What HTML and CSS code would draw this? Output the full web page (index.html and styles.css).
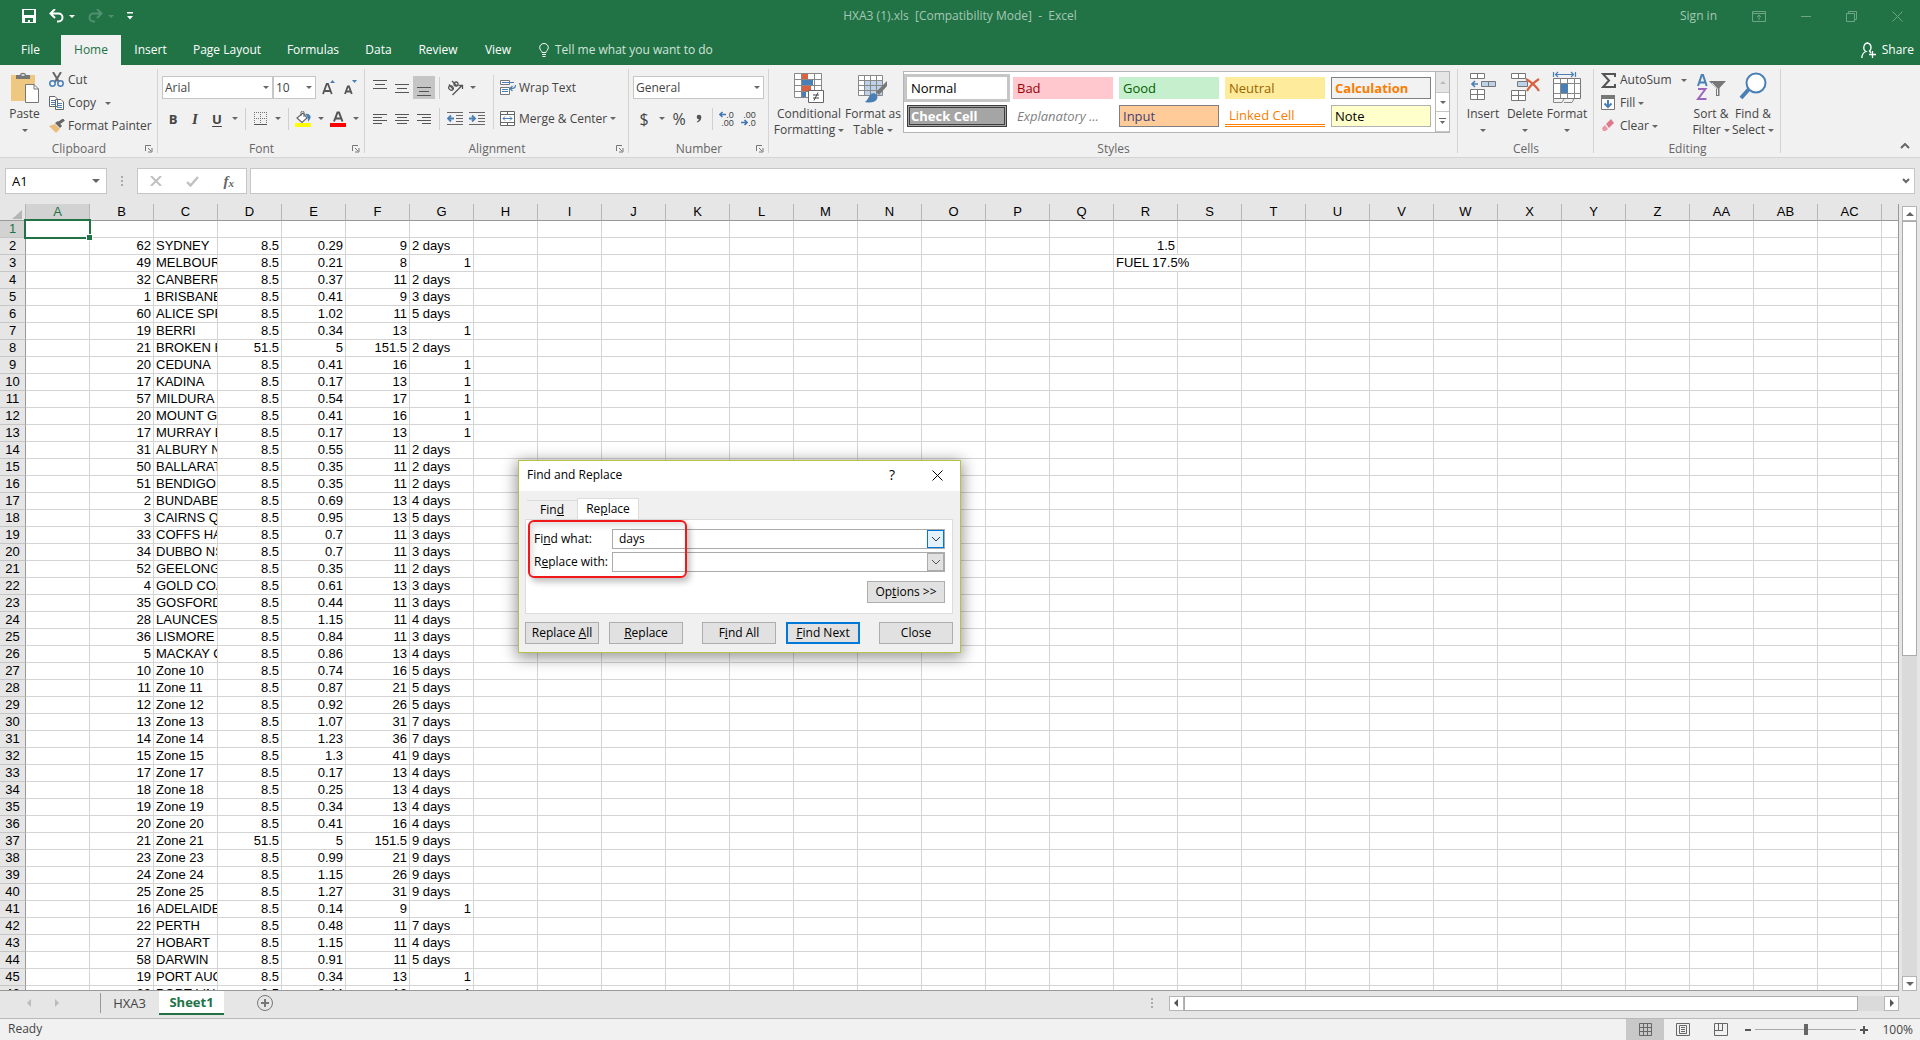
FILE: index.html
```html
<!DOCTYPE html>
<html lang="en">
<head>
<meta charset="utf-8">
<title>HXA3 (1).xls - Excel</title>
<link rel="stylesheet" href="styles.css">
</head>
<body>
<header class="titlebar">
  <div class="quick">
    <button class="plain" aria-label="Save"><svg width="14" height="14" viewBox="0 0 14 14"><path fill="#fff" fill-rule="evenodd" d="M0 0H14V14H0ZM2 1V6H12V1ZM3 9V13H6V11H8V13H11V9Z"/></svg></button>
    <button class="plain undo" aria-label="Undo"><svg width="15" height="14" viewBox="0 0 15 14"><path d="M6 0L1.500 4.500L6 9M2 4.500H9.500A4 4 0 0 1 9.500 12.500H8" fill="none" stroke="#fff" stroke-width="2"/></svg><i class="caret"></i></button>
    <button class="plain redo" aria-label="Redo"><svg width="15" height="14" viewBox="0 0 15 14"><path d="M9 0L13.500 4.500L9 9M13 4.500H5.500A4 4 0 0 0 5.500 12.500H7" fill="none" stroke="#4f9170" stroke-width="2"/></svg><i class="caret"></i></button>
    <button class="plain" aria-label="Customize toolbar"><svg width="6" height="8" viewBox="0 0 6 8"><path d="M0 0H6V1.500H0ZM0 4H6L3 7.500Z" fill="#fff"/></svg></button>
  </div>
  <div class="doc">HXA3 (1).xls&nbsp; [Compatibility Mode]&nbsp; -&nbsp; Excel</div>
  <div class="window">
    <a href="#">Sign in</a>
    <button class="plain" aria-label="Ribbon display"><svg width="14" height="11" viewBox="0 0 14 11"><path d="M.5.500H13.500V10.500H.5ZM.5 2.500H13.500M7 9V4M5 6L7 4L9 6" fill="none" stroke="#6fa587"/></svg></button>
    <button class="plain" aria-label="Minimize"><svg width="10" height="11"><path d="M0 5.500H10" stroke="#6fa587"/></svg></button>
    <button class="plain" aria-label="Restore"><svg width="11" height="11"><path d="M.5 2.500H8.500V10.500H.5ZM2.500 2.500V.5H10.500V8.500H8.500" fill="none" stroke="#6fa587"/></svg></button>
    <button class="plain" aria-label="Close"><svg width="11" height="11"><path d="M.5.500L10.500 10.500M10.500.5L.5 10.500" stroke="#6fa587"/></svg></button>
  </div>
</header>
<div class="tabbar">
  <nav class="tabs">
    <a href="#">File</a><a href="#" class="on">Home</a><a href="#">Insert</a><a href="#">Page Layout</a><a href="#">Formulas</a><a href="#">Data</a><a href="#">Review</a><a href="#">View</a>
  </nav>
  <button class="plain tell"><svg width="10" height="14" viewBox="0 0 10 14"><path d="M3 9.500C3 8 .7 7 .7 4.500A4.300 4 0 0 1 9.300 4.500C9.300 7 7 8 7 9.500ZM3 11.500H7M3.500 13.500H6.500" fill="none" stroke="#fff"/></svg>Tell me what you want to do</button>
  <button class="plain share"><svg width="16" height="17" viewBox="0 0 16 17"><path d="M6.500 1A4 4.500 0 0 1 8.500 9L10 11M7 1A4 4.500 0 0 0 5 9.500C2 10.500 1 13 .8 16M11.500 9V16M8 12.500H15" fill="none" stroke="#fff" stroke-width="1.300"/></svg>Share</button>
</div>

<div class="ribbon">
  <section class="group clipboard">
    <div class="body">
      <button class="tall"><svg width="30" height="32" viewBox="0 0 30 32"><path d="M1 4H25V30H1Z" fill="#eec880"/><path d="M6 8V4H10C10 1 16 1 16 4H20V8Z" fill="#777"/><path d="M11.500 4H14.500" stroke="#f0f0f0" stroke-width="1.500"/><path d="M15.500 13.500H24L28.500 18V31.500H15.500Z" fill="#fff" stroke="#777"/><path d="M24 13.500V18H28.500" fill="none" stroke="#777"/></svg><span>Paste</span><span><i class="caret"></i></span></button>
      <div class="stack">
        <button class="row"><svg width="16" height="16" viewBox="0 0 16 16"><path d="M4 0L10 10M12 0L6 10" stroke="#666" stroke-width="2"/><g fill="none" stroke="#4a7fb5" stroke-width="1.500"><circle cx="3.500" cy="11.500" r="2.700"/><circle cx="11.500" cy="11.500" r="2.700"/></g></svg>Cut</button>
        <button class="row"><svg width="16" height="14" viewBox="0 0 16 14"><path d="M.5.500H6L8.500 3V10.500H.5ZM6.500 3.500H12L14.500 6V13.500H6.500Z" fill="#fff" stroke="#666"/><path d="M2 4.500H6M2 6.500H6M2 8.500H6M8 7.500H13M8 9.500H13M8 11.500H13" stroke="#4a7fb5"/></svg>Copy<i class="caret wide"></i></button>
        <button class="row"><svg width="16" height="14" viewBox="0 0 16 14"><path d="M0 7L6 5L11 10L7 14Z" fill="#e9be7c"/><path d="M6 4L9 2L13 7L11 9Z" fill="#666"/><path d="M10 4L15 .5" stroke="#666" stroke-width="3"/></svg>Format Painter</button>
      </div>
    </div>
    <footer>Clipboard<svg class="launch" viewBox="0 0 8 8"><path d="M.5 6V.5H6M3 3L6 6M7 3V7H3" fill="none" stroke="#777"/></svg></footer>
  </section>

  <section class="group font">
    <div class="body lines">
      <div class="line">
        <label class="combo name"><select aria-label="Font"><option>Arial</option></select><i class="caret"></i></label><label class="combo size"><select aria-label="Font size"><option>10</option></select><i class="caret"></i></label>
        <button class="icon grow" aria-label="Grow font"><svg width="14" height="16" viewBox="0 0 14 16"><path d="M1 14L4.700 4H6L9.700 14M2.500 11H8" fill="none" stroke="#555" stroke-width="1.800"/><path d="M8 3H13L10.500 0Z" fill="#4a7fb5"/></svg></button>
        <button class="icon" aria-label="Shrink font"><svg width="14" height="16" viewBox="0 0 14 16"><path d="M1 14L3.800 6.500H5L7.800 14M2.500 11.500H7" fill="none" stroke="#555" stroke-width="1.800"/><path d="M8 0H13L10.500 3Z" fill="#4a7fb5"/></svg></button>
      </div>
      <div class="line">
        <button class="icon b">B</button><button class="icon i">I</button><button class="icon u">U</button><button class="drop" aria-label="Underline style"><i class="caret"></i></button>
        <i class="rule"></i>
        <button class="icon" aria-label="Borders"><svg width="13" height="13" viewBox="0 0 13 13"><path d="M.5 0V12M6.500 0V12M12.500 0V12M0 .5H13M0 6.500H13" stroke="#777" stroke-dasharray="1 1"/><path d="M0 12.500H13" stroke="#555"/></svg></button><button class="drop" aria-label="Border style"><i class="caret"></i></button>
        <i class="rule"></i>
        <button class="icon" aria-label="Fill colour"><svg width="16" height="16" viewBox="0 0 16 16"><path d="M2 7L8 2L12 7L7 11.500Z" fill="#fff" stroke="#666" stroke-width="1.200"/><path d="M6 5V1.500A1.500 1.500 0 0 1 9 1.500V6" fill="none" stroke="#666"/><path d="M10 3C14 2 17 5 15 8L13 11C13 8 13 6 10 3Z" fill="#4a7fb5"/><path d="M0 12H16V16H0Z" fill="#ff0"/></svg></button><button class="drop" aria-label="Fill colours"><i class="caret"></i></button>
        <button class="icon" aria-label="Font colour"><svg width="16" height="16" viewBox="0 0 16 16"><path d="M4 10.500L7.500 1.500H9L12.500 10.500M5.500 7.500H11" fill="none" stroke="#555" stroke-width="2"/><path d="M0 12H16V16H0Z" fill="#f00"/></svg></button><button class="drop" aria-label="Font colours"><i class="caret"></i></button>
      </div>
    </div>
    <footer>Font<svg class="launch" viewBox="0 0 8 8"><path d="M.5 6V.5H6M3 3L6 6M7 3V7H3" fill="none" stroke="#777"/></svg></footer>
  </section>

  <section class="group align">
    <div class="body">
      <div class="lines">
        <div class="line">
          <button class="icon" aria-label="Top align"><svg width="14" height="16"><path d="M0 .5H14M2 4.500H12M0 8.500H14" stroke="#555"/></svg></button>
          <button class="icon" aria-label="Middle align"><svg width="14" height="16"><path d="M0 4.500H14M2 8.500H12M0 12.500H14" stroke="#555"/></svg></button>
          <button class="icon pressed" aria-label="Bottom align"><svg width="14" height="16"><path d="M0 7.500H14M2 11.500H12M0 15.500H14" stroke="#555"/></svg></button>
          <i class="rule"></i>
          <button class="icon" aria-label="Orientation"><svg width="17" height="16" viewBox="0 0 17 16"><g fill="none" stroke="#555" stroke-width="1.300"><ellipse cx="4" cy="8" rx="2" ry="2.500" transform="rotate(-45 4 8)"/><path d="M2 4.500L6 9M5 1L10 6M5.500 15L15 5.500M11.500 5.500H15.500V9"/><circle cx="9" cy="4" r="2"/></g></svg></button><button class="drop" aria-label="Orientation menu"><i class="caret"></i></button>
        </div>
        <div class="line">
          <button class="icon" aria-label="Align left"><svg width="14" height="12"><path d="M0 1.500H14M0 4.500H9M0 7.500H14M0 10.500H9" stroke="#555"/></svg></button>
          <button class="icon" aria-label="Center"><svg width="14" height="12"><path d="M0 1.500H14M2 4.500H12M0 7.500H14M2 10.500H12" stroke="#555"/></svg></button>
          <button class="icon" aria-label="Align right"><svg width="14" height="12"><path d="M0 1.500H14M5 4.500H14M0 7.500H14M5 10.500H14" stroke="#555"/></svg></button>
          <i class="rule"></i>
          <button class="icon" aria-label="Decrease indent"><svg width="16" height="13"><path d="M0 .5H16M9 3.500H16M9 6.500H16M9 9.500H16M0 12.500H16" stroke="#666"/><path d="M7 6.500H1M4 3.500L1 6.500L4 9.500" fill="none" stroke="#4a7fb5" stroke-width="1.800"/></svg></button>
          <button class="icon" aria-label="Increase indent"><svg width="16" height="13"><path d="M0 .5H16M9 3.500H16M9 6.500H16M9 9.500H16M0 12.500H16" stroke="#666"/><path d="M0 6.500H6M3 3.500L6 6.500L3 9.500" fill="none" stroke="#4a7fb5" stroke-width="1.800"/></svg></button>
        </div>
      </div>
      <div class="lines wraps">
        <button class="row line"><svg width="16" height="16" viewBox="0 0 16 16"><path d="M.5.500H9.500V4.500H.5ZM.5 7.500H9.500V14.500H.5Z" fill="#fff" stroke="#777"/><path d="M2 2.500H14M2 9.500H8M2 11.500H8M15.500 5C15.500 8 14 8.500 10 8.500M12.500 6L10 8.500L12.500 11" fill="none" stroke="#4a7fb5" stroke-width="1.200"/></svg>Wrap Text</button>
        <button class="row line"><svg width="16" height="15" viewBox="0 0 16 15"><path d="M.5.500H14.500V14.500H.5ZM.5 3.500H14.500M.5 11.500H14.500M7.500.5V3.500M7.500 11.500V14.500" fill="#fff" stroke="#666"/><path d="M3 7.500H12M5 5.500L3 7.500L5 9.500M10 5.500L12 7.500L10 9.500" fill="none" stroke="#4a7fb5"/></svg>Merge &amp; Center<i class="caret"></i></button>
      </div>
    </div>
    <footer>Alignment<svg class="launch" viewBox="0 0 8 8"><path d="M.5 6V.5H6M3 3L6 6M7 3V7H3" fill="none" stroke="#777"/></svg></footer>
  </section>

  <section class="group number">
    <div class="body lines">
      <div class="line"><label class="combo format"><select aria-label="Number format"><option>General</option></select><i class="caret"></i></label></div>
      <div class="line">
        <button class="icon sym">$</button><button class="drop" aria-label="Currency"><i class="caret"></i></button><button class="icon sym">%</button><button class="icon sym comma" aria-label="Comma style"><svg width="6" height="9" viewBox="0 0 6 9"><circle cx="3" cy="3" r="2.300" fill="#555"/><path d="M5.300 3C5.300 6 4 7.800 1 8.500L.8 7.700C2.500 7 3 6 3 4Z" fill="#555"/></svg></button>
        <i class="rule"></i>
        <button class="icon dec" aria-label="Increase decimal"><span><svg width="7" height="7"><path d="M7 3.500H1M3.500 1L1 3.500L3.500 6" fill="none" stroke="#3f77b3" stroke-width="1.600"/></svg>.0</span><span>.00</span></button>
        <button class="icon dec" aria-label="Decrease decimal"><span>.00</span><span><svg width="7" height="7"><path d="M0 3.500H6M3.500 1L6 3.500L3.500 6" fill="none" stroke="#3f77b3" stroke-width="1.600"/></svg>.0</span></button>
      </div>
    </div>
    <footer>Number<svg class="launch" viewBox="0 0 8 8"><path d="M.5 6V.5H6M3 3L6 6M7 3V7H3" fill="none" stroke="#777"/></svg></footer>
  </section>

  <section class="group styles">
    <div class="body">
      <button class="tall cond"><svg width="30" height="32" viewBox="0 0 30 32"><path d="M.5 2.500H27.500V26.500H.5Z" fill="#fff"/><path d="M8 3H14V8H8ZM8 15H17V20H8Z" fill="#d9613f"/><path d="M8 9H19V14H8ZM8 21H12V26H8Z" fill="#4a7fb5"/><path d="M.5 2.500H27.500V26.500H.5ZM7.500 2.500V26.500M20.500 2.500V26.500M.5 8.500H27.500M.5 14.500H27.500M.5 20.500H27.500" fill="none" stroke="#888"/><path d="M14.500 19.500H29.500V31.500H14.500Z" fill="#fff" stroke="#666"/><path d="M19 24H25M19 27H25M24 21.500L20 29.500" stroke="#444"/></svg><span>Conditional</span><span>Formatting<i class="caret"></i></span></button>
      <button class="tall"><svg width="30" height="32" viewBox="0 0 30 32"><path d="M.5 4.500H24.500V24.500H.5Z" fill="#fff"/><path d="M7 10H24V24H7Z" fill="#bdd2e8"/><path d="M.5 4.500H24.500V24.500H.5ZM6.500 4.500V24.500M12.500 4.500V24.500M18.500 4.500V24.500M.5 9.500H24.500M.5 14.500H24.500M.5 19.500H24.500" fill="none" stroke="#888"/><path d="M29 10V15L21 24L18 21Z" fill="#777"/><path d="M7 31C10 29 10 26 13 23C16 21 21 24 19 28C17 32 11 32 7 31Z" fill="#4a7fb5"/></svg><span>Format as</span><span>Table<i class="caret"></i></span></button>
      <div class="gallery">
        <div class="swatches">
          <button class="s normal">Normal</button><button class="s bad">Bad</button><button class="s good">Good</button><button class="s neutral">Neutral</button><button class="s calc">Calculation</button>
          <button class="s check">Check Cell</button><button class="s expl">Explanatory ...</button><button class="s inp">Input</button><button class="s link">Linked Cell</button><button class="s note">Note</button>
        </div>
        <div class="scroller"><button class="off" aria-label="Previous styles"><i class="caret up"></i></button><button aria-label="Next styles"><i class="caret"></i></button><button aria-label="More styles"><svg width="7" height="7"><path d="M0 .5H7" stroke="#666"/><path d="M1 3H6L3.500 6Z" fill="#666"/></svg></button></div>
      </div>
    </div>
    <footer>Styles</footer>
  </section>

  <section class="group cells">
    <div class="body">
      <button class="tall"><svg width="28" height="32" viewBox="0 0 28 32"><path d="M1.500 2.500H15.500V7.500H1.500ZM8.500 2.500V7.500M1.500 18.500H15.500V28.500H1.500ZM8.500 18.500V28.500M1.500 23.500H15.500" fill="#fff" stroke="#777"/><path d="M12.500 10.500H26.500V15.500H12.500ZM19.500 10.500V15.500" fill="#bdd2e8" stroke="#777"/><path d="M9 13H3M6 10L3 13L6 16" fill="none" stroke="#4a7fb5" stroke-width="1.600"/></svg><span>Insert</span><span><i class="caret"></i></span></button>
      <button class="tall"><svg width="30" height="32" viewBox="0 0 30 32"><path d="M1.500 2.500H15.500V7.500H1.500ZM8.500 2.500V7.500M1.500 19.500H15.500V29.500H1.500ZM8.500 19.500V29.500M1.500 24.500H15.500" fill="#fff" stroke="#777"/><path d="M7.500 10.500H17.500V15.500H7.500Z" fill="#bdd2e8" stroke="#777"/><path d="M16 8C21 11 26 15 29 20M29 8C23 12 19 16 17 20" fill="none" stroke="#d9613f" stroke-width="2.200"/></svg><span>Delete</span><span><i class="caret"></i></span></button>
      <button class="tall"><svg width="30" height="32" viewBox="0 0 30 32"><path d="M1.500 7.500H28.500V27.500H1.500Z" fill="#fff" stroke="#777"/><path d="M8.500 7.500V27.500M15.500 7.500V27.500M22.500 7.500V27.500M1.500 12.500H28.500M1.500 22.500H28.500M1.500 28V31.500H10L12 28M12 31.500H20L22 28" fill="none" stroke="#888"/><path d="M9 13H16V22H9Z" fill="#4a7fb5"/><path d="M1.500 1V6M23.500 1V6M3 3.500H22M6 1L3.500 3.500L6 6M19 1L21.500 3.500L19 6" fill="none" stroke="#4a7fb5" stroke-width="1.200"/></svg><span>Format</span><span><i class="caret"></i></span></button>
    </div>
    <footer>Cells</footer>
  </section>

  <section class="group editing">
    <div class="body">
      <div class="stack">
        <button class="row"><svg width="16" height="15" viewBox="0 0 16 15"><path d="M14 4V1H2L8 7.500L2 14H14V11" fill="none" stroke="#555" stroke-width="2"/></svg>AutoSum<i class="caret wide"></i></button>
        <button class="row"><svg width="16" height="16" viewBox="0 0 16 16"><path d="M.5.500H13.500V14.500H.5Z" fill="#fff" stroke="#777"/><path d="M0 0H14V4H0Z" fill="#777"/><path d="M7 5V12M3.500 8.500L7 12L10.500 8.500" fill="none" stroke="#4a7fb5" stroke-width="2"/></svg>Fill<i class="caret"></i></button>
        <button class="row"><svg width="16" height="14" viewBox="0 0 16 14"><path d="M5 5L10 0L13 4L8 9Z" fill="#e0788b"/><path d="M4 6L7 10L4.500 12H2L1 9Z" fill="#e996a5"/></svg>Clear<i class="caret"></i></button>
      </div>
      <button class="tall"><svg width="30" height="32" viewBox="0 0 30 32"><path d="M2 15L5.700 4H7L10.700 15M3.500 11.500H9" fill="none" stroke="#4a7fb5" stroke-width="2"/><path d="M2 18H9.500L2 28H10.500" fill="none" stroke="#9b66bb" stroke-width="2"/><path d="M13 10H30L23.500 17V25H20V17Z" fill="#777"/><path d="M16 12L21.500 18V24" fill="none" stroke="#f0f0f0"/></svg><span>Sort &amp;</span><span>Filter<i class="caret"></i></span></button>
      <button class="tall"><svg width="28" height="32" viewBox="0 0 28 32"><path d="M10 18L2 27" stroke="#4a7fb5" stroke-width="4"/><circle cx="17" cy="12" r="9.500" fill="#fff" stroke="#4a7fb5" stroke-width="2"/></svg><span>Find &amp;</span><span>Select<i class="caret"></i></span></button>
    </div>
    <footer>Editing</footer>
  </section>
  <button class="plain collapse" aria-label="Collapse ribbon"><svg width="10" height="6"><path d="M1 5L5 1L9 5" fill="none" stroke="#666" stroke-width="2"/></svg></button>
</div>

<div class="formula">
  <label class="namebox"><input aria-label="Name box" value="A1"><i class="caret big"></i></label>
  <i class="dots"></i>
  <div class="fx">
    <button class="plain" aria-label="Cancel"><svg width="12" height="10"><path d="M1 0L11 10M11 0L1 10" stroke="#c0c0c0" stroke-width="2"/></svg></button>
    <button class="plain" aria-label="Enter"><svg width="13" height="11"><path d="M1 6L4.500 9.500L12 1" fill="none" stroke="#c0c0c0" stroke-width="2.400"/></svg></button>
    <button class="plain fn">f<small>x</small></button>
  </div>
  <label class="entry"><input aria-label="Formula"><svg width="8" height="6"><path d="M1 1L4 4L7 1" fill="none" stroke="#666" stroke-width="2"/></svg></label>
</div>

<main class="sheet">
<div class="grid">
<table>
<colgroup><col class="rowhead"><col span="30"></colgroup>
<thead><tr><th class="corner"><svg width="10" height="9"><path d="M10 0V9H0Z" fill="#b5b5b5"/></svg><th class="sel">A<th>B<th>C<th>D<th>E<th>F<th>G<th>H<th>I<th>J<th>K<th>L<th>M<th>N<th>O<th>P<th>Q<th>R<th>S<th>T<th>U<th>V<th>W<th>X<th>Y<th>Z<th>AA<th>AB<th>AC<th></tr></thead>
<tbody>
<tr><th class="sel">1<td class="active"><i class="cursor"></i>
<tr><th>2<td><td>62<td>SYDNEY<td>8.5<td>0.29<td>9<td class="t">2 days<td colspan="10"><td class="n">1.5
<tr><th>3<td><td>49<td>MELBOURNE<td>8.5<td>0.21<td>8<td>1<td colspan="10"><td class="spill" colspan="2"><span>FUEL 17.5%</span>
<tr><th>4<td><td>32<td>CANBERRA<td>8.5<td>0.37<td>11<td class="t">2 days
<tr><th>5<td><td>1<td>BRISBANE<td>8.5<td>0.41<td>9<td class="t">3 days
<tr><th>6<td><td>60<td>ALICE SPRINGS<td>8.5<td>1.02<td>11<td class="t">5 days
<tr><th>7<td><td>19<td>BERRI<td>8.5<td>0.34<td>13<td>1
<tr><th>8<td><td>21<td>BROKEN HILL<td>51.5<td>5<td>151.5<td class="t">2 days
<tr><th>9<td><td>20<td>CEDUNA<td>8.5<td>0.41<td>16<td>1
<tr><th>10<td><td>17<td>KADINA<td>8.5<td>0.17<td>13<td>1
<tr><th>11<td><td>57<td>MILDURA<td>8.5<td>0.54<td>17<td>1
<tr><th>12<td><td>20<td>MOUNT GAMBIER<td>8.5<td>0.41<td>16<td>1
<tr><th>13<td><td>17<td>MURRAY BRIDGE<td>8.5<td>0.17<td>13<td>1
<tr><th>14<td><td>31<td>ALBURY NSW<td>8.5<td>0.55<td>11<td class="t">2 days
<tr><th>15<td><td>50<td>BALLARAT<td>8.5<td>0.35<td>11<td class="t">2 days
<tr><th>16<td><td>51<td>BENDIGO<td>8.5<td>0.35<td>11<td class="t">2 days
<tr><th>17<td><td>2<td>BUNDABERG<td>8.5<td>0.69<td>13<td class="t">4 days
<tr><th>18<td><td>3<td>CAIRNS QLD<td>8.5<td>0.95<td>13<td class="t">5 days
<tr><th>19<td><td>33<td>COFFS HARBOUR<td>8.5<td>0.7<td>11<td class="t">3 days
<tr><th>20<td><td>34<td>DUBBO NSW<td>8.5<td>0.7<td>11<td class="t">3 days
<tr><th>21<td><td>52<td>GEELONG<td>8.5<td>0.35<td>11<td class="t">2 days
<tr><th>22<td><td>4<td>GOLD COAST<td>8.5<td>0.61<td>13<td class="t">3 days
<tr><th>23<td><td>35<td>GOSFORD<td>8.5<td>0.44<td>11<td class="t">3 days
<tr><th>24<td><td>28<td>LAUNCESTON<td>8.5<td>1.15<td>11<td class="t">4 days
<tr><th>25<td><td>36<td>LISMORE<td>8.5<td>0.84<td>11<td class="t">3 days
<tr><th>26<td><td>5<td>MACKAY QLD<td>8.5<td>0.86<td>13<td class="t">4 days
<tr><th>27<td><td>10<td>Zone 10<td>8.5<td>0.74<td>16<td class="t">5 days
<tr><th>28<td><td>11<td>Zone 11<td>8.5<td>0.87<td>21<td class="t">5 days
<tr><th>29<td><td>12<td>Zone 12<td>8.5<td>0.92<td>26<td class="t">5 days
<tr><th>30<td><td>13<td>Zone 13<td>8.5<td>1.07<td>31<td class="t">7 days
<tr><th>31<td><td>14<td>Zone 14<td>8.5<td>1.23<td>36<td class="t">7 days
<tr><th>32<td><td>15<td>Zone 15<td>8.5<td>1.3<td>41<td class="t">9 days
<tr><th>33<td><td>17<td>Zone 17<td>8.5<td>0.17<td>13<td class="t">4 days
<tr><th>34<td><td>18<td>Zone 18<td>8.5<td>0.25<td>13<td class="t">4 days
<tr><th>35<td><td>19<td>Zone 19<td>8.5<td>0.34<td>13<td class="t">4 days
<tr><th>36<td><td>20<td>Zone 20<td>8.5<td>0.41<td>16<td class="t">4 days
<tr><th>37<td><td>21<td>Zone 21<td>51.5<td>5<td>151.5<td class="t">9 days
<tr><th>38<td><td>23<td>Zone 23<td>8.5<td>0.99<td>21<td class="t">9 days
<tr><th>39<td><td>24<td>Zone 24<td>8.5<td>1.15<td>26<td class="t">9 days
<tr><th>40<td><td>25<td>Zone 25<td>8.5<td>1.27<td>31<td class="t">9 days
<tr><th>41<td><td>16<td>ADELAIDE<td>8.5<td>0.14<td>9<td>1
<tr><th>42<td><td>22<td>PERTH<td>8.5<td>0.48<td>11<td class="t">7 days
<tr><th>43<td><td>27<td>HOBART<td>8.5<td>1.15<td>11<td class="t">4 days
<tr><th>44<td><td>58<td>DARWIN<td>8.5<td>0.91<td>11<td class="t">5 days
<tr><th>45<td><td>19<td>PORT AUGUSTA<td>8.5<td>0.34<td>13<td>1
<tr><th>46<td><td>20<td>PORT LINCOLN<td>8.5<td>0.44<td>16<td>1
</tbody>
</table>
</div>
<div class="vscroll">
  <button aria-label="Scroll up"><i class="caret up big"></i></button>
  <i class="thumb"></i><i class="track"></i>
  <button aria-label="Scroll down"><i class="caret big"></i></button>
</div>
</main>

<div class="sheetbar">
  <button class="plain" aria-label="Previous sheet"><svg width="4" height="8"><path d="M4 0V8L0 4Z" fill="#bcbcbc"/></svg></button>
  <button class="plain next" aria-label="Next sheet"><svg width="4" height="8"><path d="M0 0V8L4 4Z" fill="#bcbcbc"/></svg></button>
  <a href="#" class="stab">HXA3</a><a href="#" class="stab on">Sheet1</a>
  <button class="plain add" aria-label="New sheet"><svg width="16" height="16"><circle cx="8" cy="8" r="7.500" fill="none" stroke="#777"/><path d="M8 4V12M4 8H12" stroke="#777" stroke-width="2"/></svg></button>
  <i class="dots"></i>
  <div class="hscroll">
    <button aria-label="Scroll left"><svg width="4" height="8"><path d="M4 0V8L0 4Z" fill="#555"/></svg></button>
    <i class="thumb"></i><i class="track"></i>
    <button aria-label="Scroll right"><svg width="4" height="8"><path d="M0 0V8L4 4Z" fill="#555"/></svg></button>
  </div>
</div>

<footer class="status">
  <span class="ready">Ready</span>
  <button class="view on" aria-label="Normal view"><svg width="13" height="13"><path d="M.5.500H12.500V12.500H.5ZM4.500 0V13M8.500 0V13M0 4.500H13M0 8.500H13" fill="none" stroke="#666"/></svg></button>
  <button class="view" aria-label="Page layout view"><svg width="14" height="13"><path d="M.5.500H13.500V12.500H.5ZM3.500 2.500H10.500V10.500H3.500ZM5 4.500H9M5 6.500H9M5 8.500H9" fill="none" stroke="#666"/></svg></button>
  <button class="view" aria-label="Page break view"><svg width="14" height="13"><path d="M.5.500H13.500V12.500H.5ZM4.500 0V7.500M8.500 0V7.500M0 7.500H9" fill="none" stroke="#666"/></svg></button>
  <div class="zoom">
    <button class="plain" aria-label="Zoom out"><svg width="6" height="8"><path d="M0 4H6" stroke="#555" stroke-width="2"/></svg></button>
    <input type="range" aria-label="Zoom" value="50">
    <button class="plain" aria-label="Zoom in"><svg width="8" height="8"><path d="M0 4H8M4 0V8" stroke="#555" stroke-width="2"/></svg></button>
    <span>100%</span>
  </div>
</footer>

<div class="dialog" role="dialog" aria-label="Find and Replace">
  <div class="dtitle"><span>Find and Replace</span><button class="plain q">?</button><button class="plain x" aria-label="Close dialog"><svg width="11" height="11"><path d="M.5.500L10.500 10.500M10.500.5L.5 10.500" stroke="#000"/></svg></button></div>
  <div class="dbody">
    <div class="dtabs"><button>Fin<u>d</u></button><button class="on">Re<u>p</u>lace</button></div>
    <div class="panel">
      <label for="what">Fi<u>n</u>d what:</label><div class="dcombo hot"><input id="what" value="days"><button aria-label="Recent searches"><svg width="8" height="5"><path d="M0 0L4 4L8 0" fill="none" stroke="#333"/></svg></button></div>
      <label for="with">R<u>e</u>place with:</label><div class="dcombo"><input id="with"><button aria-label="Recent replacements"><svg width="8" height="5"><path d="M0 0L4 4L8 0" fill="none" stroke="#555"/></svg></button></div>
      <button class="btn options">Op<u>t</u>ions &gt;&gt;</button>
      <i class="mark"></i>
    </div>
    <div class="actions"><button class="btn">Replace <u>A</u>ll</button><button class="btn"><u>R</u>eplace</button><button class="btn gap">F<u>i</u>nd All</button><button class="btn primary"><u>F</u>ind Next</button><button class="btn gap">Close</button></div>
  </div>
</div>
</body>
</html>
```

FILE: styles.css
```css
* { box-sizing: border-box; }
body {
  margin: 0; height: 100vh; display: flex; flex-direction: column; overflow: hidden;
  position: relative; background: #e6e6e6; color: #444;
  font: 12px/16px "Open Sans", "Noto Sans", sans-serif;
}
button, input, select { font: inherit; color: inherit; margin: 0; border-radius: 0; }
button { padding: 0; border: 0; background: none; }
a { color: inherit; text-decoration: none; }
svg { display: block; flex: none; }
.plain { display: flex; align-items: center; }
.caret { flex: none; display: inline-block; width: 0; height: 0; border: 3px solid transparent; border-bottom: 0; border-top-color: #666; }
.caret.up { border-bottom: 3px solid #bbb; border-top: 0; }
.caret.big { border-width: 4px 4px 0; }
.caret.up.big { border-width: 0 4px 4px; border-bottom-color: #666; }
.dots { width: 2px; height: 10px; background: repeating-linear-gradient(#aaa 0 2px, transparent 2px 4px); }

/* title bar and tabs */
.titlebar { flex: none; height: 35px; background: #217346; color: #a6c7b5; display: grid; grid-template-columns: 1fr auto 1fr; align-items: center; padding-bottom: 3px; }
.quick { display: flex; align-items: center; padding-left: 22px; gap: 13px; }
.quick .undo, .quick .redo { gap: 5px; }
.quick .caret { border-top-color: #fff; }
.quick .redo .caret { border-top-color: #4f9170; }
.window { display: flex; align-items: center; justify-content: flex-end; gap: 35px; padding-right: 17px; }
.tabbar { flex: none; height: 30px; background: #217346; color: #fff; display: flex; align-items: stretch; }
.tabs { display: grid; grid-template-columns: 61px 60px 59px 94px 78px 53px 66px 54px; }
.tabs a { display: flex; align-items: center; justify-content: center; }
.tabs .on { background: #f1f1f1; color: #217346; }
.tell { margin-left: 14px; gap: 6px; color: #d3e3da; }
.share { margin-left: auto; padding-right: 6px; gap: 5px; }

/* ribbon */
.ribbon { flex: none; height: 93px; background: #f1f1f1; border-bottom: 1px solid #d5d5d5; display: flex; }
.group { flex: none; display: flex; flex-direction: column; padding-top: 6px; background: linear-gradient(#d4d4d4, #d4d4d4) right 4px / 1px 84px no-repeat; }
.body { flex: 1; display: flex; align-items: flex-start; }
.group footer { height: 16px; display: grid; grid-template-columns: 13px 1fr 13px; text-align: center; align-items: center; color: #666; }
.group footer::before { content: ""; }
.launch { width: 8px; height: 8px; }
.clipboard { width: 158px; } .font { width: 207px; } .align { width: 264px; } .number { width: 140px; }
.styles { width: 689px; } .cells { width: 136px; } .editing { width: 187px; }
.tall { display: flex; flex-direction: column; align-items: center; }
.tall svg { margin-bottom: 3px; }
.tall span { height: 16px; display: flex; align-items: center; gap: 3px; white-space: nowrap; }
.stack { display: flex; flex-direction: column; gap: 5px; }
.row { display: flex; align-items: center; gap: 3px; height: 18px; white-space: nowrap; }
.caret.wide { margin-left: 6px; }
.clipboard .tall { width: 49px; }
.lines { display: flex; flex-direction: column; padding-top: 5px; gap: 8px; }
.line, .row.line { display: flex; align-items: center; height: 23px; }
.font .body, .number .body { padding-left: 4px; }
.icon { width: 22px; height: 23px; display: flex; align-items: center; justify-content: center; }
.drop { width: 13px; height: 23px; }
.drop .caret { display: block; margin: auto; }
.rule { width: 1px; height: 22px; background: #d0d0d0; margin: 0 4px; }
.font .rule { margin: 0 3px 0 4px; }
.b, .i, .u { font-weight: 700; font-size: 13px; }
.i { font-family: "Liberation Serif", serif; font-style: italic; font-size: 15px; }
.u { text-decoration: underline; text-underline-offset: 2px; }
.grow { margin-left: 2px; }
.combo { display: grid; height: 23px; }
.combo > * { grid-area: 1 / 1; }
.combo .caret { align-self: center; justify-self: end; margin-right: 4px; pointer-events: none; }
.combo select { appearance: none; border: 1px solid #c6c6c6; background: #fff; padding: 0 2px; width: 100%; height: 23px; }
.name { width: 111px; } .size { width: 43px; } .format { width: 131px; }
.pressed { background: #c5c5c5; }
.align .body { padding-left: 4px; }
.wraps { margin-left: 5px; padding-left: 7px; background: linear-gradient(#d4d4d4, #d4d4d4) left 4px / 1px 54px no-repeat; }
.sym { font-size: 16px; }
.comma { width: 18px; }
.dec { display: grid; font: 9px/8px "Liberation Sans", sans-serif; align-content: center; justify-items: end; padding-right: 3px; }
.dec span { display: flex; align-items: center; }
.cond { width: 78px; }
.styles .body { padding-left: 1px; }
.styles .tall + .tall { width: 50px; }
.gallery { margin-left: 5px; display: flex; height: 62px; border: 1px solid #b5b5b5; background: #fff; }
.swatches { display: grid; grid-template-columns: repeat(5, 100px); grid-auto-rows: 22px; gap: 6px; padding: 5px 4px 0 3px; }
.s { text-align: left; padding: 0 4px; white-space: nowrap; font-size: 13px; border: 0 solid; }
.normal { outline: 3px solid #c6c6c6; color: #000; }
.bad { background: #ffc7ce; color: #9c0006; } .good { background: #c6efce; color: #006100; } .neutral { background: #ffeb9c; color: #9c6500; }
.calc { background: #f2f2f2; color: #fa7d00; border: 1px solid #7f7f7f; padding: 0 3px; font-weight: 700; }
.check { background: #a5a5a5; color: #fff; border: 3px double #3f3f3f; padding: 0 1px; font-weight: 700; }
.expl { color: #7f7f7f; font-style: italic; }
.inp { background: #fc9; color: #3f3f76; border: 1px solid #7f7f7f; padding: 0 3px; }
.link { color: #fa7d00; border-bottom: 3px double #ff8001; }
.note { background: #ffc; color: #000; border: 1px solid #b2b2b2; padding: 0 3px; }
.scroller { width: 14px; display: grid; grid-template-rows: 21px 19px 20px; border-left: 1px solid #b5b5b5; }
.scroller button { display: grid; place-items: center; border-bottom: 1px solid #c6c6c6; }
.scroller .off { background: #e6e6e6; }
.cells .body { padding-left: 4px; }
.cells .tall { width: 42px; }
.editing .body { padding-left: 7px; }
.editing .stack { width: 89px; }
.editing .tall { width: 42px; }
.collapse { margin-left: auto; padding: 78px 10px 0 0; height: 92px; align-items: flex-start; }

/* formula bar */
.formula { flex: none; display: flex; align-items: stretch; height: 46px; padding: 10px 5px; }
.namebox, .fx, .entry { display: flex; align-items: center; background: #fff; border: 1px solid #c6c6c6; }
.namebox { width: 102px; padding-right: 6px; }
.formula input { flex: 1; min-width: 0; border: 0; background: none; padding: 0 6px; color: #000; font-size: 13px; }
.formula .dots { margin: 8px 14px 0; }
.fx { width: 110px; justify-content: space-around; }
.fn { font: italic 700 15px/16px "Liberation Serif", serif; color: #666; }
.fn small { font-size: 11px; padding-top: 3px; }
.entry { flex: 1; margin-left: 3px; padding-right: 4px; }

/* worksheet */
.sheet { flex: 1; min-height: 0; display: flex; }
.grid {
  flex: 1; min-width: 0; overflow: hidden; border: solid #999; border-width: 0 1px 1px 0;
  background:
    repeating-linear-gradient(90deg, transparent 0 63px, #d4d4d4 63px 64px) 26px 0,
    repeating-linear-gradient(transparent 0 16px, #d4d4d4 16px 17px) #fff;
}
table { width: 1946px; table-layout: fixed; border-spacing: 0; font: 13px/16px "Liberation Sans", Arial, sans-serif; color: #000; }
col { width: 64px; }
col.rowhead { width: 26px; }
th, td { height: 17px; padding: 0 2px; overflow: hidden; white-space: nowrap; text-align: right; font-weight: 400; }
td { border-right: 1px solid transparent; border-bottom: 1px solid transparent; }
th { background: #e6e6e6; text-align: center; border: solid; border-width: 0 1px 1px 0; border-color: #999 #999 #c6c6c6; }
thead th { border-color: #999 #b5b5b5 #999; }
.corner { padding: 4px 3px 0 12px; }
th.sel { background: #d2d2d2; color: #217346; }
td:nth-child(4), td.t, td.spill { text-align: left; }
.spill span { display: inline-block; background: #fff; }
td.active { position: relative; overflow: visible; }
.cursor { position: absolute; inset: -2px; border: 2px solid #217346; }
.cursor::after { content: ""; position: absolute; right: -3px; bottom: -3px; width: 5px; height: 5px; background: #217346; outline: 1px solid #fff; }
.vscroll { width: 21px; padding: 2px 3px 0 3px; display: flex; flex-direction: column; }
.vscroll button, .hscroll button { flex: none; width: 15px; height: 15px; background: #fff; border: 1px solid #b5b5b5; display: grid; place-items: center; }
.thumb { background: #fff; border: 1px solid #ababab; }
.track { background: #dadada; }
.vscroll .thumb { flex: 434; } .vscroll .track { flex: 321; }

/* sheet tabs */
.sheetbar { flex: none; height: 28px; display: flex; align-items: center; border-bottom: 1px solid #b9b9b9; padding: 0 21px 3px 27px; }
.sheetbar .next { margin-left: 24px; }
.stab { font-size: 13px; align-self: stretch; width: 59px; display: grid; place-items: center; }
.next + .stab { margin-left: 41px; background: linear-gradient(#999, #999) left center / 1px 20px no-repeat; }
.stab.on { width: 65px; background: #fff; color: #217346; font-weight: 700; border-bottom: 2px solid #217346; }
.add { margin-left: 33px; }
.sheetbar .dots { margin: 0 16px 0 auto; }
.hscroll { width: 39%; display: flex; }
.hscroll .thumb { flex: 674; } .hscroll .track { flex: 26; }

/* status bar */
.status { flex: none; height: 21px; background: #f1f1f1; display: flex; align-items: stretch; }
.ready { padding: 2px 8px; margin-right: auto; }
.view { width: 38px; display: grid; place-items: center; }
.view.on { background: #c8c8c8; }
.zoom { display: flex; align-items: center; gap: 4px; padding: 0 7px 0 5px; }
.zoom span { margin-left: 10px; }
.zoom input { appearance: none; width: 101px; height: 11px; background: linear-gradient(#aaa, #aaa) center / 100% 1px no-repeat; }
.zoom input::-webkit-slider-thumb { appearance: none; width: 4px; height: 11px; background: #666; }

/* find and replace */
.dialog { position: absolute; left: 518px; top: 460px; width: 443px; border: 1px solid #b9c04a; background: #f0f0f0; color: #000; box-shadow: 0 3px 14px 2px rgba(0,0,0,.4); }
.dtitle { height: 30px; background: #fff; display: flex; align-items: center; padding: 0 17px 2px 8px; }
.dtitle .q { margin-left: auto; font-size: 14px; }
.dtitle .x { margin-left: 37px; }
.dbody { padding: 7px 7px 8px 6px; }
.dtabs { display: flex; align-items: flex-end; padding-left: 2px; }
.dtabs button { width: 50px; height: 19px; border-top: 1px solid #dcdcdc; }
.dtabs .on { width: 62px; height: 21px; background: #fff; border: 1px solid #dcdcdc; border-bottom: 0; }
.panel { position: relative; height: 95px; border: 1px solid #dcdcdc; background: #fff; display: grid; grid-template-columns: 78px 1fr; grid-auto-rows: 20px; row-gap: 3px; align-items: center; padding: 9px 7px 0 8px; }
.dcombo { display: flex; height: 20px; border: 1px solid #ababab; }
.dcombo input { flex: 1; min-width: 0; border: 0; padding: 0 6px; }
.dcombo button { width: 17px; background: #e1e1e1; border: 1px solid #ababab; display: grid; place-items: center; }
.dcombo.hot button { background: #e5f1fb; border-color: #0078d7; }
.btn { width: 74px; height: 22px; background: #e1e1e1; border: 1px solid #adadad; }
.options { grid-column: 2; justify-self: end; width: 78px; margin-top: 14px; }
.primary { border: 2px solid #0078d7; }
.actions { display: flex; gap: 10px; padding-top: 8px; }
.actions .gap { margin-left: 9px; }
.mark { position: absolute; left: 2px; top: 0; width: 159px; height: 58px; border: 2px solid #f01818; border-radius: 6px; box-shadow: 3px 4px 6px rgba(0,0,0,.25), inset 3px 4px 6px rgba(0,0,0,.12); pointer-events: none; }
```
